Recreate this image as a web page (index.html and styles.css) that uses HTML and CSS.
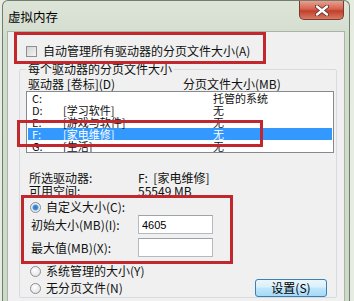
FILE: index.html
```html
<!DOCTYPE html>
<html lang="zh-CN">
<head>
    <meta charset="UTF-8">
    <title>虚拟内存</title>
    <link rel="stylesheet" href="styles.css">
</head>
<body>

<div class="window">
    <div class="titlebar">
        <span class="title">虚拟内存</span>
        <button class="close-btn">
            <svg width="14" height="11" viewBox="0 0 14 11">
                <path d="M2 1.5 L12 9.5 M12 1.5 L2 9.5" stroke="#5a2a2a" stroke-width="4" stroke-linecap="round"/>
                <path d="M2 1.5 L12 9.5 M12 1.5 L2 9.5" stroke="#ffffff" stroke-width="2.4" stroke-linecap="round"/>
            </svg>
        </button>
    </div>

    <div class="client">
        <div class="auto-row">
            <span class="checkbox"></span>
            <span>自动管理所有驱动器的分页文件大小(A)</span>
        </div>

        <fieldset class="group">
            <legend>每个驱动器的分页文件大小</legend>

            <div class="col-head">
                <span>驱动器 [卷标](D)</span>
                <span>分页文件大小(MB)</span>
            </div>

            <div class="listbox">
                <div class="drive-row"><span>C:</span><span></span><span>托管的系统</span></div>
                <div class="drive-row"><span>D:</span><span>[学习软件]</span><span>无</span></div>
                <div class="drive-row"><span>E:</span><span>[游戏与软件]</span><span>无</span></div>
                <div class="drive-row selected"><span>F:</span><span>[家电维修]</span><span>无</span></div>
                <div class="drive-row"><span>G:</span><span>[生活]</span><span>无</span></div>
            </div>

            <div class="info">
                <span>所选驱动器:</span><span>F:&nbsp;&nbsp;[家电维修]</span>
                <span>可用空间:</span><span>55549 MB</span>
            </div>

            <div class="radio-row first">
                <span class="radio checked"></span>
                <span>自定义大小(C):</span>
            </div>
            <div class="field-row first">
                <span class="field-label">初始大小(MB)(I):</span>
                <input class="text-input" type="text" value="4605">
            </div>
            <div class="field-row">
                <span class="field-label">最大值(MB)(X):</span>
                <input class="text-input" type="text" value="">
            </div>

            <div class="radio-row system">
                <span class="radio"></span>
                <span>系统管理的大小(Y)</span>
            </div>
            <div class="radio-row last">
                <span class="radio"></span>
                <span>无分页文件(N)</span>
                <button class="set-btn">设置(S)</button>
            </div>
        </fieldset>
    </div>
</div>

<!-- red marks drawn over the dialog -->
<div class="mark mark-auto"></div>
<div class="mark mark-drive"></div>
<div class="mark mark-custom"></div>

</body>
</html>
```

FILE: styles.css
```css
body, html {
    margin: 0;
    padding: 0;
    font-family: "Noto Sans CJK SC", "Liberation Sans", sans-serif;
    font-size: 12px;
    color: #111;
    background: #e6ece2;
    overflow: hidden;
}

.window {
    position: relative;
    margin-left: 2px;
    width: 348px;
    height: 301px;
    padding: 0 4px;
    box-sizing: border-box;
    border: 1px solid #6f7f6b;
    border-bottom: none;
    border-radius: 6px 6px 0 0;
    background: linear-gradient(to bottom, #dde5d8, #d2dccd 40px, #cfd9ca);
    overflow: hidden;
}

.titlebar {
    display: flex;
    align-items: flex-start;
    height: 30px;
}

.title {
    margin: 8px 0 0 1px;
    font-size: 12.5px;
    line-height: 16px;
    color: #000;
}

.close-btn {
    margin-left: auto;
    margin-right: 1px;
    width: 45px;
    height: 19px;
    padding: 0;
    display: flex;
    align-items: center;
    justify-content: center;
    border: 1px solid #7b3a32;
    border-top: none;
    border-radius: 0 0 5px 5px;
    background: linear-gradient(to bottom, #e9a08f, #d3634f 45%, #c23f2c 55%, #d77a62);
}

.client {
    height: 280px;
    box-sizing: border-box;
    border: 1px solid #a9b4a5;
    background: #f0f0f0;
}

.auto-row {
    display: flex;
    align-items: center;
    height: 14px;
    margin-top: 12px;
    padding-left: 18px;
    line-height: 14px;
}

.checkbox {
    width: 9px;
    height: 9px;
    margin-right: 6px;
    border: 1px solid #8f8f8f;
    background: linear-gradient(135deg, #d4d4d4, #f4f4f4);
}

.group {
    margin: 4px 9px 0 11px;
    padding: 1px 1px 0 6px;
    width: 318px;
    box-sizing: border-box;
    border: 1px solid #d5dbe0;
    border-radius: 2px;
}

.group legend {
    padding: 0 2px;
    line-height: 14px;
}

.col-head {
    display: flex;
    line-height: 14px;
    padding-left: 2px;
}

.col-head span:first-child {
    width: 155px;
}

.listbox {
    margin-right: 1px;
    padding: 0 1px;
    height: 62px;
    box-sizing: border-box;
    border: 1px solid #858a90;
    background: #fff;
    overflow: hidden;
}

.drive-row {
    display: grid;
    grid-template-columns: 31px 150px 1fr;
    padding-left: 4px;
    height: 12px;
    font-size: 11px;
    line-height: 12px;
}

.drive-row.selected {
    background: #3399ff;
    color: #fff;
}

.info {
    display: grid;
    grid-template-columns: 109px 1fr;
    margin-top: 18px;
    padding-left: 3px;
    line-height: 13px;
}

.radio-row {
    display: flex;
    align-items: center;
    height: 14px;
    padding-left: 4px;
    line-height: 14px;
}

.radio-row.first {
    margin-top: 3px;
}

.radio-row.system {
    margin-top: 7px;
}

.radio-row.last {
    height: 18px;
    margin-top: 1px;
}

.radio {
    width: 9px;
    height: 9px;
    margin-right: 5px;
    border: 1px solid #8d8d8d;
    border-radius: 50%;
    background: radial-gradient(circle at 40% 35%, #ffffff, #dcdcdc);
}

.radio.checked {
    background: radial-gradient(circle, #2b6fc4 0, #4e93dd 2.5px, #e8f0f8 3.5px, #d6dde6);
}

.field-row {
    display: flex;
    align-items: center;
    height: 19px;
    margin-top: 4px;
    padding-left: 5px;
}

.field-row.first {
    margin-top: 1px;
}

.field-label {
    width: 107px;
}

.text-input {
    width: 75px;
    height: 19px;
    box-sizing: border-box;
    padding: 0 3px;
    border: 1px solid #b5b9c0;
    border-top-color: #9ea3aa;
    font-family: "Liberation Sans", sans-serif;
    font-size: 11px;
    color: #000;
    background: #fff;
}

.set-btn {
    margin-left: auto;
    margin-right: 8px;
    width: 72px;
    height: 18px;
    padding: 0;
    border: 1px solid #3c7fb1;
    border-radius: 3px;
    background: linear-gradient(to bottom, #eaf6fd, #d9f0fc 45%, #bee6fd 50%, #a7d9f5);
    font-family: "Noto Sans CJK SC", sans-serif;
    font-size: 12px;
    line-height: 16px;
    color: #000;
}

.mark {
    position: absolute;
    box-sizing: border-box;
    border: 3px solid #c1272d;
}

.mark-auto {
    left: 14px;
    top: 32px;
    width: 252px;
    height: 32px;
}

.mark-drive {
    left: 17px;
    top: 120px;
    width: 246px;
    height: 27px;
}

.mark-custom {
    left: 21px;
    top: 195px;
    width: 212px;
    height: 69px;
}
```
